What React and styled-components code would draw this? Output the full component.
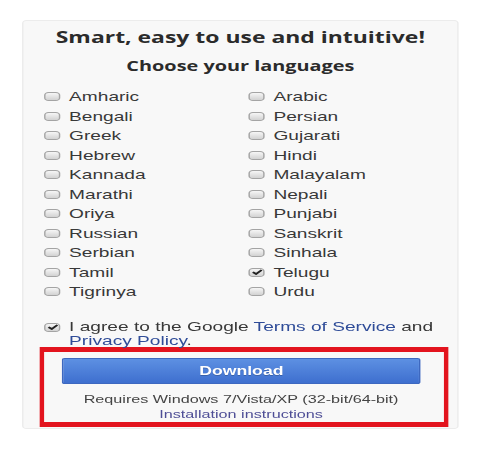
import React from 'react';
import styled, { createGlobalStyle } from 'styled-components';

const GlobalStyle = createGlobalStyle`
  html, body {
    margin: 0;
    padding: 0;
    background: #ffffff;
  }
  body {
    font-family: "Liberation Sans", Arial, sans-serif;
    color: #333333;
  }
`;

// the screenshot is squeezed wide, so the whole page is drawn at its natural size and stretched
const Stage = styled.div`
  width: 340px;
  transform: scaleX(1.47);
  transform-origin: 0 0;
  padding-top: 20px;
`;

const Panel = styled.div`
  margin-left: 15px;
  width: 297px;
  box-sizing: border-box;
  background: #f8f8f8;
  border: 1px solid #ececec;
  border-radius: 3px;
  padding: 6px 0 1px;
`;

const Title = styled.h1`
  margin: 0;
  font-family: "Open Sans", sans-serif;
  font-weight: 700;
  font-size: 15.6px;
  line-height: 20px;
  text-align: center;
  color: #2b2b2b;
`;

const Subtitle = styled.h2`
  margin: 9px 0 0;
  font-family: "Open Sans", sans-serif;
  font-weight: 700;
  font-size: 13.5px;
  line-height: 20px;
  text-align: center;
  color: #2b2b2b;
`;

const LangGrid = styled.div`
  display: grid;
  grid-template-columns: 139px 139px;
  grid-auto-rows: 19.5px;
  margin: 11px 0 0 14px;
`;

const Option = styled.label`
  display: flex;
  align-items: center;
  gap: 6px;
  font-size: 13px;
  color: #383838;
`;

const Box = styled.span`
  flex: none;
  width: 11px;
  height: 9px;
  box-sizing: border-box;
  border: 1px solid #a4a4a4;
  border-radius: 3px;
  background: linear-gradient(#f6f6f6, #d2d2d2);
  display: flex;
  align-items: center;
  justify-content: center;
`;

const Agree = styled.div`
  display: flex;
  align-items: flex-start;
  gap: 6px;
  margin: 18px 0 0 14px;
  font-size: 13px;
  line-height: 14.5px;
  color: #383838;
  ${Box} {
    margin-top: 3px;
  }
`;

const Link = styled.a`
  color: #2f4c98;
  text-decoration: none;
`;

const Highlight = styled.div`
  margin: -2px 0 0 10.5px;
  width: 278px;
  box-sizing: border-box;
  border-style: solid;
  border-color: #e3141e;
  border-width: 5px 3px;
  padding: 6px 0 0;
  display: flex;
  flex-direction: column;
  align-items: center;
`;

const DownloadButton = styled.button`
  align-self: flex-start;
  width: 244px;
  height: 26px;
  margin-left: 12.7px;
  border: 1px solid #3d68c0;
  border-radius: 2px;
  background: linear-gradient(#5d90e2, #3e6fcf);
  color: #ffffff;
  font-family: "Liberation Sans", Arial, sans-serif;
  font-weight: 700;
  font-size: 12px;
  text-shadow: 0 1px 0 rgba(0, 0, 0, 0.2);
  cursor: pointer;
`;

const Note = styled.div`
  margin-top: ${p => p.$gap || 0}px;
  margin-left: -3px;
  font-size: 11px;
  line-height: 15px;
  color: ${p => p.$color || '#444444'};
`;

const languages = [
  ['Amharic', 'Arabic'],
  ['Bengali', 'Persian'],
  ['Greek', 'Gujarati'],
  ['Hebrew', 'Hindi'],
  ['Kannada', 'Malayalam'],
  ['Marathi', 'Nepali'],
  ['Oriya', 'Punjabi'],
  ['Russian', 'Sanskrit'],
  ['Serbian', 'Sinhala'],
  ['Tamil', 'Telugu'],
  ['Tigrinya', 'Urdu'],
];

const Tick = () => (
  <svg width="8" height="6" viewBox="0 0 8 6">
    <path d="M1 3.2 L3.2 5 L7 1" fill="none" stroke="#222" strokeWidth="1.7" />
  </svg>
);

const Check = ({ checked }) => <Box>{checked && <Tick />}</Box>;

const App = () => (
  <>
    <GlobalStyle />
    <Stage>
      <Panel>
        <Title>Smart, easy to use and intuitive!</Title>
        <Subtitle>Choose your languages</Subtitle>
        <LangGrid>
          {languages.flat().map(name => (
            <Option key={name}>
              <Check checked={name === 'Telugu'} />
              {name}
            </Option>
          ))}
        </LangGrid>
        <Agree>
          <Check checked />
          <span>
            I agree to the Google <Link href="#">Terms of Service</Link> and{' '}
            <Link href="#">Privacy Policy</Link>.
          </span>
        </Agree>
        <Highlight>
          <DownloadButton>Download</DownloadButton>
          <Note $gap={8}>Requires Windows 7/Vista/XP (32-bit/64-bit)</Note>
          <Note $color="#4e4e96">Installation instructions</Note>
        </Highlight>
      </Panel>
    </Stage>
  </>
);

export default App;
